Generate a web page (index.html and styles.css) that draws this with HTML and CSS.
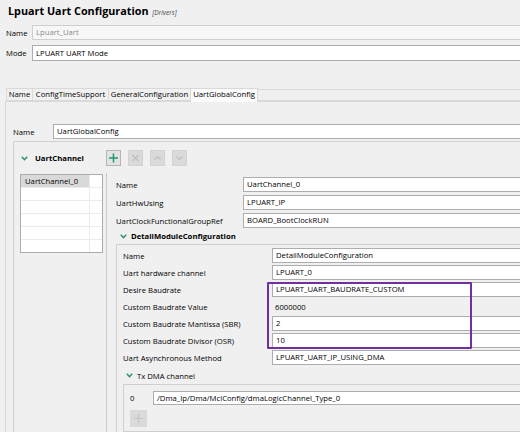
FILE: index.html
```html
<!DOCTYPE html>
<html lang="en">

<head>
    <meta charset="UTF-8">
    <title>Lpuart Uart Configuration</title>
    <link rel="stylesheet" href="styles.css">
</head>

<body>
    <div class="page">
        <h1 class="title">Lpuart Uart Configuration <span class="title__tag">[Drivers]</span></h1>

        <div class="prop-row prop-row--name">
            <span class="prop-row__label">Name</span>
            <div class="field field--disabled">Lpuart_Uart</div>
        </div>
        <div class="prop-row prop-row--mode">
            <span class="prop-row__label">Mode</span>
            <div class="field field--tall">LPUART UART Mode</div>
        </div>

        <!-- tab strip -->
        <div class="tabs">
            <div class="tab tab--name">Name</div>
            <div class="tab tab--time">ConfigTimeSupport</div>
            <div class="tab tab--general">GeneralConfiguration</div>
            <div class="tab tab--active">UartGlobalConfig</div>
            <div class="tabs__fill"></div>
        </div>

        <div class="tab-panel">
            <div class="prop-row">
                <span class="tab-panel__label">Name</span>
                <div class="field">UartGlobalConfig</div>
            </div>

            <div class="group">
                <div class="group__head">
                    <div class="group__title">
                        <svg class="chevron" width="7" height="5" viewBox="0 0 7 5">
                            <path d="M0.8 0.8 L3.5 3.8 L6.2 0.8" fill="none" stroke="#2b8c6c" stroke-width="1.4" />
                        </svg>
                        <span>UartChannel</span>
                    </div>
                    <div class="toolbar">
                        <div class="tool-btn">
                            <svg width="15" height="16" viewBox="0 0 15 16">
                                <path d="M7.5 3.5v9M3 8h9" stroke="#1e9a6c" stroke-width="1.5" fill="none" />
                            </svg>
                        </div>
                        <div class="tool-btn tool-btn--off">
                            <svg width="15" height="16" viewBox="0 0 15 16">
                                <path d="M4.5 5l6 6M10.5 5l-6 6" stroke="#bfbfbf" stroke-width="1.2" fill="none" />
                            </svg>
                        </div>
                        <div class="tool-btn tool-btn--off">
                            <svg width="15" height="16" viewBox="0 0 15 16">
                                <path d="M4.5 9.5l3-3 3 3" stroke="#bfbfbf" stroke-width="1.2" fill="none" />
                            </svg>
                        </div>
                        <div class="tool-btn tool-btn--off">
                            <svg width="15" height="16" viewBox="0 0 15 16">
                                <path d="M4.5 6.5l3 3 3-3" stroke="#bfbfbf" stroke-width="1.2" fill="none" />
                            </svg>
                        </div>
                    </div>
                </div>

                <div class="group__body">
                    <div class="list">
                        <div class="list__row list__row--selected"><span class="list__cell">UartChannel_0</span><span class="list__cell list__cell--end"></span></div>
                        <div class="list__row"><span class="list__cell"></span><span class="list__cell list__cell--end"></span></div>
                        <div class="list__row"><span class="list__cell"></span><span class="list__cell list__cell--end"></span></div>
                        <div class="list__row"><span class="list__cell"></span><span class="list__cell list__cell--end"></span></div>
                        <div class="list__row"><span class="list__cell"></span><span class="list__cell list__cell--end"></span></div>
                        <div class="list__row"><span class="list__cell"></span><span class="list__cell list__cell--end"></span></div>
                    </div>

                    <div class="detail">
                        <div class="detail__row">
                            <span class="detail__label">Name</span>
                            <div class="field">UartChannel_0</div>
                        </div>
                        <div class="detail__row">
                            <span class="detail__label">UartHwUsing</span>
                            <div class="field">LPUART_IP</div>
                        </div>
                        <div class="detail__row">
                            <span class="detail__label">UartClockFunctionalGroupRef</span>
                            <div class="field">BOARD_BootClockRUN</div>
                        </div>

                        <div class="section-head section-head--detail">
                            <svg class="chevron" width="7" height="5" viewBox="0 0 7 5">
                                <path d="M0.8 0.8 L3.5 3.8 L6.2 0.8" fill="none" stroke="#2b8c6c" stroke-width="1.4" />
                            </svg>
                            <span>DetailModuleConfiguration</span>
                        </div>

                        <div class="subpanel">
                            <div class="sub-row">
                                <span class="sub-row__label">Name</span>
                                <div class="field">DetailModuleConfiguration</div>
                            </div>
                            <div class="sub-row">
                                <span class="sub-row__label">Uart hardware channel</span>
                                <div class="field">LPUART_0</div>
                            </div>
                            <div class="sub-row">
                                <span class="sub-row__label">Desire Baudrate</span>
                                <div class="field">LPUART_UART_BAUDRATE_CUSTOM</div>
                            </div>
                            <div class="sub-row">
                                <span class="sub-row__label">Custom Baudrate Value</span>
                                <span class="sub-row__value">6000000</span>
                            </div>
                            <div class="sub-row">
                                <span class="sub-row__label">Custom Baudrate Mantissa (SBR)</span>
                                <div class="field">2</div>
                            </div>
                            <div class="sub-row">
                                <span class="sub-row__label">Custom Baudrate Divisor (OSR)</span>
                                <div class="field">10</div>
                            </div>
                            <div class="sub-row">
                                <span class="sub-row__label">Uart Asynchronous Method</span>
                                <div class="field">LPUART_UART_IP_USING_DMA</div>
                            </div>

                            <div class="section-head section-head--dma">
                                <svg class="chevron" width="7" height="5" viewBox="0 0 7 5">
                                    <path d="M0.8 0.8 L3.5 3.8 L6.2 0.8" fill="none" stroke="#2b8c6c" stroke-width="1.4" />
                                </svg>
                                <span>Tx DMA channel</span>
                            </div>

                            <div class="dma-box">
                                <div class="dma-box__row">
                                    <span class="dma-box__index">0</span>
                                    <div class="field field--short">/Dma_Ip/Dma/MclConfig/dmaLogicChannel_Type_0</div>
                                </div>
                                <div class="add-btn">
                                    <svg width="17" height="17" viewBox="0 0 17 17">
                                        <path d="M8.5 4v9M4 8.5h9" stroke="#c4c4c4" stroke-width="1.2" fill="none" />
                                    </svg>
                                </div>
                            </div>
                        </div>
                    </div>
                </div>
            </div>
        </div>

        <!-- purple call-out drawn over the form -->
        <div class="highlight"></div>
    </div>
</body>

</html>
```

FILE: styles.css
```css
html,
body {
    margin: 0;
    background-color: #f0f0f0;
    overflow: hidden;
}

body {
    font-family: "Open Sans", "Noto Sans", sans-serif;
    font-size: 7.7px;
    color: #000;
}

.page {
    position: relative;
    width: 520px;
    height: 432px;
    overflow: hidden;
}

.title {
    margin: 0;
    height: 22px;
    line-height: 22px;
    padding-left: 8px;
    font-size: 10.8px;
    font-weight: 700;
    white-space: nowrap;
}

.title__tag {
    margin-left: 1px;
    font-size: 6.6px;
    font-weight: 400;
    font-style: italic;
    color: #444;
}

.prop-row {
    display: flex;
    align-items: center;
}

.prop-row--name,
.prop-row--mode {
    padding-left: 6px;
}

.prop-row--name {
    margin-top: 3px;
}

.prop-row--mode {
    margin-top: 5px;
}

.prop-row__label {
    width: 26px;
    flex-shrink: 0;
}

/* text boxes run on past the right edge of the window */
.field {
    flex: 1;
    min-width: 0;
    box-sizing: border-box;
    height: 15px;
    line-height: 13px;
    padding-left: 3px;
    border: 1px solid #adadad;
    border-right: none;
    background-color: #fff;
    white-space: nowrap;
    overflow: hidden;
}

.field--tall {
    height: 16px;
    line-height: 14px;
}

.field--disabled {
    color: #8a8a8a;
    background-color: #f7f7f7;
    border-color: #cfcfcf;
}

.field--short {
    height: 14px;
    line-height: 12px;
}

/* tabs */
.tabs {
    display: flex;
    height: 13px;
    margin-top: 27px;
    padding-left: 6px;
}

.tab {
    box-sizing: border-box;
    height: 13px;
    line-height: 11px;
    margin-left: -1px;
    border: 1px solid #d9d9d9;
    text-align: center;
    white-space: nowrap;
    background-color: #f0f0f0;
}

.tab:first-child {
    margin-left: 0;
}

.tab--name {
    width: 27px;
}

.tab--time {
    width: 77px;
}

.tab--general {
    width: 83px;
}

.tab--active {
    position: relative;
    z-index: 1;
    width: 68px;
    height: 14px;
    border-bottom: none;
    background-color: #fbfbfb;
}

.tabs__fill {
    flex: 1;
    box-sizing: border-box;
    height: 12px;
    margin-top: 1px;
    border-top: 1px solid #d9d9d9;
    border-bottom: 1px solid #d9d9d9;
}

.tab-panel {
    margin-left: 5px;
    padding: 22px 0 0 7px;
    border-left: 1px solid #d9d9d9;
    border-top: 1px solid #d9d9d9;
}

.tab-panel__label {
    width: 40px;
    flex-shrink: 0;
}

/* UartChannel group */
.group {
    margin-top: 2px;
    padding: 8px 0 0 6px;
    border-left: 1px solid #d0d0d0;
    border-top: 1px solid #d0d0d0;
}

.group__head {
    display: flex;
    align-items: center;
    height: 16px;
}

.group__title {
    width: 86px;
    display: flex;
    align-items: center;
    font-weight: 700;
}

.chevron {
    flex-shrink: 0;
}

.group__title .chevron {
    margin: 0 7px 0 1px;
}

.toolbar {
    display: flex;
    gap: 7px;
}

.tool-btn {
    box-sizing: border-box;
    width: 15px;
    height: 16px;
    border: 1px solid #b5b5b5;
    background-color: #e3e3e3;
    display: flex;
    align-items: center;
    justify-content: center;
}

.tool-btn svg {
    flex-shrink: 0;
}

.tool-btn--off {
    border-color: #d2d2d2;
    background-color: #dadada;
}

.group__body {
    display: flex;
    align-items: flex-start;
    margin-top: 8px;
}

.list {
    box-sizing: border-box;
    width: 83px;
    height: 79px;
    border: 1px solid #adadad;
    background-color: #fff;
    overflow: hidden;
}

.list__row {
    display: flex;
    height: 12px;
    border-bottom: 1px solid #ebebeb;
}

.list__cell {
    width: 69px;
    line-height: 12px;
    padding-left: 4px;
    box-sizing: border-box;
    border-right: 1px solid #ebebeb;
}

.list__cell--end {
    flex: 1;
    border-right: none;
}

.list__row--selected .list__cell:first-child {
    background-color: #d9d9d9;
}

/* right side details */
.detail {
    flex: 1;
    min-width: 0;
    height: 261px;
    margin: -1px 0 0 3px;
    padding: 4px 0 0 9px;
    border-left: 1px solid #c9c9c9;
}

.detail__row {
    display: flex;
    align-items: center;
    margin-bottom: 3px;
}

.detail__label {
    width: 127px;
    flex-shrink: 0;
}

.section-head {
    display: flex;
    align-items: center;
    font-weight: 700;
}

.section-head--detail {
    height: 16px;
    margin-top: -3px;
}

.section-head--detail .chevron {
    margin: 0 4px 0 4px;
}

.section-head--dma {
    height: 17px;
    font-weight: 400;
}

.section-head--dma .chevron {
    margin: 0 4px 0 3px;
}

.subpanel {
    padding: 3px 0 0 6px;
    border-left: 1px solid #d0d0d0;
    border-top: 1px solid #d0d0d0;
}

.sub-row {
    display: flex;
    align-items: center;
    height: 15px;
    margin-bottom: 2px;
}

.sub-row__label {
    width: 149px;
    flex-shrink: 0;
}

.sub-row__value {
    padding-left: 3px;
}

.dma-box {
    padding: 6px 0 4px 6px;
    border: 1px solid #d0d0d0;
    border-right: none;
}

.dma-box__row {
    display: flex;
    align-items: center;
}

.dma-box__index {
    width: 23px;
    flex-shrink: 0;
}

.add-btn {
    width: 17px;
    height: 17px;
    margin-top: 5px;
    background-color: #dadada;
}

.add-btn svg {
    display: block;
}

.highlight {
    position: absolute;
    left: 267px;
    top: 282px;
    width: 201px;
    height: 63px;
    border: 2px solid #70309f;
    border-radius: 1px;
    pointer-events: none;
}
```
